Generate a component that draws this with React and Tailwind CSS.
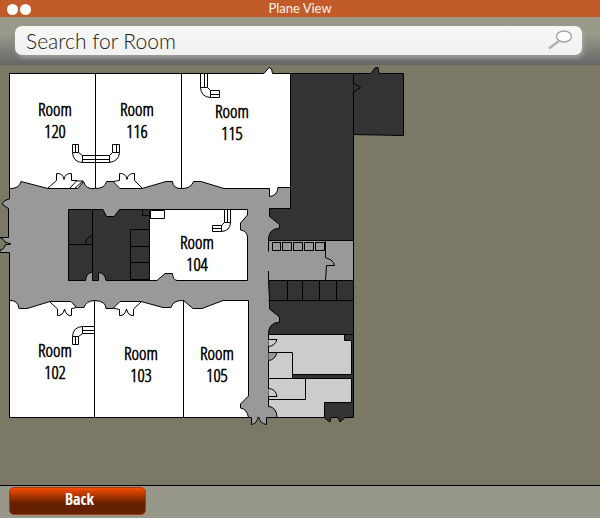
const rooms = [
  { number: '120', x: 55, y: 116 },
  { number: '116', x: 137, y: 116 },
  { number: '115', x: 232, y: 118 },
  { number: '104', x: 197, y: 249 },
  { number: '102', x: 55, y: 357 },
  { number: '103', x: 141, y: 360 },
  { number: '105', x: 217, y: 360 },
];

const lockers = [
  { x: 272, width: 8 },
  { x: 282, width: 9 },
  { x: 293, width: 9 },
  { x: 304, width: 9 },
  { x: 315, width: 9 },
];

function TitleBar() {
  return (
    <header className="relative flex h-[17px] items-start justify-center bg-[#c15c2a]">
      <div className="absolute left-[7px] top-1 flex gap-[2px]">
        <span className="size-[11px] rounded-full bg-white" />
        <span className="size-[11px] rounded-full bg-white" />
      </div>
      <h1 className="font-['Lato',sans-serif] text-[13px] leading-4 text-[#fff3ea]">Plane View</h1>
    </header>
  );
}

function SearchBar() {
  return (
    <form
      className="h-12 bg-linear-to-b from-[#9a9a8b] from-35% to-[#666666] pl-[15px] pr-[18px] pt-[9px]"
      onSubmit={(event) => event.preventDefault()}
    >
      <div className="flex h-[29px] items-center rounded-[7px] bg-linear-to-b from-[#f7f7f5] to-[#f1f1f1] pl-[11px] pr-[9px] shadow-[2px_3px_4px_#b0b0b0b0]">
        <input
          type="text"
          aria-label="Search for Room"
          placeholder="Search for Room"
          className="h-[29px] min-w-0 flex-1 bg-transparent font-['Lato',sans-serif] text-[21px] font-light leading-7 text-black outline-none placeholder:text-[#202020]"
        />
        <button type="submit" aria-label="Search">
          <svg width="26" height="22" viewBox="0 0 26 22" fill="none">
            <path d="M2 18.500 L12 11" stroke="#b4b4b4" strokeWidth="2.600" />
            <ellipse cx="17" cy="6.500" rx="7.500" ry="5.500" fill="#fff" stroke="#a3a3a3" strokeWidth="1.300" />
          </svg>
        </button>
      </div>
    </form>
  );
}

function FloorPlan() {
  return (
    <svg
      width="410"
      height="365"
      viewBox="0 65 410 365"
      role="img"
      aria-label="Floor plan"
      stroke="#000"
      strokeWidth="1"
      fill="none"
    >
      {/* corridors */}
      <path
        fill="#999"
        d="M9.5 180V199L6 200Q1 203 3 205L8.500 208.500V237.500H0Q4 239 5 242L11 244L5 245Q4 250 0 250V252.500H9.500V310H238V417.500H251.500V424.500Q257 424 258.500 416Q260 424 266.500 424.500V417.500H300V180Z"
      />

      {/* east wing */}
      <path
        fill="#333"
        d="M290.500 73.500H353.500V240.500H268.500Q268 229 279.500 228V224.500L269.500 216.500V208.500H290.500Z"
      />
      <path
        fill="#333"
        d="M353.500 73.500H371L375 68L378 67.500L379 73.500H403.500V135.500L353.500 134.500Z"
      />
      <path fill="#333" d="M353.500 83L360.500 87.500L353.500 92" />
      <path fill="#999" stroke="none" d="M268 241H353V280H268Z" />
      <path d="M268.500 240V251.500M268.500 271V280M353.500 240V280M325.500 241V257.500L331 260Q334 262 334.500 265.500H326.500L325.500 280" />
      {lockers.map((locker) => (
        <rect key={locker.x} x={locker.x + 0.5} y="242.500" width={locker.width} height="8" />
      ))}
      <path
        fill="#333"
        d="M268.500 280.500H353.500V417.500H345L340 422L338 417.500H331L330 422L324.500 418V402.500L268.500 334.500Q268 323 279.500 322V317L269.500 309V300Z"
      />
      <path d="M268.500 300.500H353.500M287.500 281V300M302.500 281V300M319.500 281V300M336.500 281V300" />
      <path fill="#ccc" d="M268.500 334.500H344.500V340.500H351.500V374.500H292.500V378.500H351.500V402.500H324.500V417.500H268.500Z" />
      <path d="M344 334.500H353M268.500 352.500H292.500V378.500H268.500M305.500 378.500V399.500H268.500" />
      <path stroke="none" fill="#333" d="M293 375H352V378H293Z" />
      <path
        fill="#ccc"
        d="M268.500 339.500H277Q275 346 268.500 346.500M268.500 388.500Q276 389 277 396.500H268.500"
      />
      <path
        fill="#999"
        d="M268.500 352.500H277Q275 360 268.500 360.500M268.500 406Q277 408 277 417.500H266.500"
      />
      <path stroke="none" fill="#999" d="M258 335H268V417H258Z" />

      {/* north rooms */}
      <path
        fill="#fff"
        d="M9.500 73.500H264L269 67.500L271.500 69L272.500 73.500H290.500V187.500H278Q277 196 269.500 196.500V188.500H224L201 181.500H193.500Q191 188.500 182 188.500Q173 189 172.500 181.500H166L142 188.500H120L113 181.500H106.500Q105 188.500 95.500 188.500Q86 190 83.500 181.500L78 188.500H48L21 181.500Q19 189 9.500 188.500Z"
      />
      <path d="M95.500 73V188M181.500 73V188" />
      <path d="M48 188L56.500 180.500V173.500Q63 173 64 179.500Q65 173 71.500 173.500V180.500H77L70 188M77 181H83L75 188" />
      <path d="M113 181.500L119.500 180.500V173.500Q126 173 127 179.500Q128 173 134.500 173.500V180.500L142 188" />

      {/* service core */}
      <path
        fill="#333"
        d="M68.500 209.500H103L106.500 216.500H114L119.500 209.500H149.500V280.500H106Q105 273 98.500 272.500V280.500H92.500V272Q86 273 85.500 280.500H68.500Z"
      />
      <path d="M92.500 209V280M68 244.500H92M85.500 244Q86 237 92.500 235.500M130.500 280V229.500H149M130.500 246.500H149M130.500 262.500H149M130 279.500H149M142.500 210V215.500H149" />

      {/* room 104 */}
      <path
        fill="#fff"
        d="M149.500 209.500H247.500V215L240.500 223V230Q247 231 247.500 237V280.500H177Q173 280 172.500 273.500H165L157 280.500H149.500Z"
      />
      <path d="M150.500 210.500H164.500V218.500H150.500Z" />

      {/* south rooms */}
      <path
        fill="#fff"
        d="M9.500 300.500Q18 300 19 308.500H27L50 301.500H71L76.500 307.500H84Q86 301 94.500 300.500Q106 301 106 308.500H113L120 301.500H141L163 307.500H171Q173 300 183.500 300.500L193 308.500H202L223 300.500H248.500V396L240.500 404V408Q247 409 248.500 417.500H9.500Z"
      />
      <path d="M94.500 300V417M183.500 300V417" />
      <path d="M50 302L57.500 309V315.500Q63 316 64.500 309Q66 316 71.500 315.500V308.500L76.500 307.500" />
      <path d="M113 308L119.500 309.500V315.500Q125 316 126.500 309Q128 316 133.500 315.500V309L141 302" />

      {/* ducts */}
      <path d="M72.500 144.500H78.500V152.500H72.500ZM75.500 144V152M72.500 152.500Q73 162 82.500 162.500M78.500 152.500L82.500 155.500M82.500 155.500H109.500V162.500H82.500ZM82 159.500H109M109.500 162.500Q119 161 119.500 152.500M109.500 155.500L112.500 152.500M112.500 144.500H119.500V152.500H112.500ZM116.500 144V152" />
      <path d="M200.500 73V87.500H207.500V73M204.500 73V87M200.500 87.500Q201 97 210.500 97.500M207.500 87.500L210.500 90.500H219.500V97.500H210.500V90.500M210 94.500H219" />
      <path d="M224.500 210V222.500H230.500V210M227.500 210V222M230.500 222.500Q230 231 221.500 231.500M224.500 222.500L221.500 225.500H212.500V231.500H221.500V225.500M212 228.500H221" />
      <path d="M94 326.500H82.500V333.500H94M82 330.500H94M82.500 326.500Q73 327 72.500 336.500M82.500 333.500L78.500 336.500H72.500V344.500H78.500V336.500M75.500 336V344" />

      <g
        fill="#000"
        stroke="#000"
        strokeWidth="0.6"
        textAnchor="middle"
        className="font-['Open_Sans_Condensed_Light','Roboto_Condensed','Open_Sans_Condensed',sans-serif] text-[18px] font-normal"
      >
        {rooms.map((room) => (
          <text key={room.number} x={room.x} y={room.y}>
            <tspan x={room.x}>Room</tspan>
            <tspan x={room.x} dy="22">
              {room.number}
            </tspan>
          </text>
        ))}
      </g>
    </svg>
  );
}

export default function App() {
  return (
    <div className="flex min-h-screen flex-col bg-[#7b7966]">
      <TitleBar />
      <SearchBar />
      <main className="flex-1 overflow-auto">
        <FloorPlan />
      </main>
      <footer className="flex h-[33px] border-t border-black bg-[#98988a] px-[9px] pt-px">
        <button
          type="button"
          className="h-7 w-[137px] rounded-[5px] border border-[#a63a10] bg-linear-to-b from-[#f84c00] via-[#642000] via-60% to-[#642000] pb-1 pl-1 font-['Open_Sans_Condensed','Roboto_Condensed',sans-serif] text-base font-bold leading-5 text-white"
        >
          Back
        </button>
      </footer>
    </div>
  );
}
